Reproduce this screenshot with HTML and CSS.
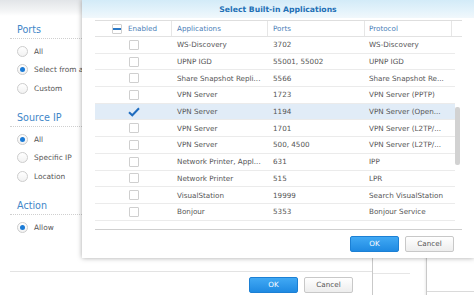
FILE: index.html
```html
<!DOCTYPE html>
<html>
<head>
<meta charset="utf-8">
<link rel="stylesheet" href="styles.css">
</head>
<body>
<div class="desk">
  <div class="far far-a"><div class="far-line"></div></div>
  <div class="far far-b"><div class="far-line"></div></div>

  <section class="win">
    <div class="win-top"></div>
    <div class="form">
      <div class="sec">
        <div class="sec-label">Ports</div>
        <div class="radio"><span class="rb"></span>All</div>
        <div class="radio"><span class="rb on"></span>Select from a list of built-in applications</div>
        <div class="radio"><span class="rb"></span>Custom</div>
      </div>
      <div class="sec">
        <div class="sec-label">Source IP</div>
        <div class="radio"><span class="rb on"></span>All</div>
        <div class="radio"><span class="rb"></span>Specific IP</div>
        <div class="radio"><span class="rb"></span>Location</div>
      </div>
      <div class="sec">
        <div class="sec-label">Action</div>
        <div class="radio"><span class="rb on"></span>Allow</div>
      </div>
    </div>
    <div class="win-foot">
      <button class="btn btn-ok">OK</button>
      <button class="btn btn-cancel">Cancel</button>
    </div>
  </section>

  <section class="dlg">
    <div class="dlg-title">Select Built-in Applications</div>
    <div class="grid">
      <div class="ghead">
        <div class="hc c-en"><span class="cb cb-mixed"><span class="bar"></span></span>Enabled</div>
        <div class="hc c-app">Applications</div>
        <div class="hc c-port">Ports</div>
        <div class="hc c-proto">Protocol</div>
        <div class="hc c-rest"></div>
      </div>
      <div class="gbody">
        <div class="rows">
          <div class="row"><div class="c c-en"><span class="cb"></span></div><div class="c c-app">WS-Discovery</div><div class="c c-port">3702</div><div class="c c-proto">WS-Discovery</div></div>
          <div class="row"><div class="c c-en"><span class="cb"></span></div><div class="c c-app">UPNP IGD</div><div class="c c-port">55001, 55002</div><div class="c c-proto">UPNP IGD</div></div>
          <div class="row"><div class="c c-en"><span class="cb"></span></div><div class="c c-app">Share Snapshot Repli...</div><div class="c c-port">5566</div><div class="c c-proto">Share Snapshot Re...</div></div>
          <div class="row"><div class="c c-en"><span class="cb"></span></div><div class="c c-app">VPN Server</div><div class="c c-port">1723</div><div class="c c-proto">VPN Server (PPTP)</div></div>
          <div class="row sel"><div class="c c-en"><span class="cb cb-on"><svg width="12" height="10" viewBox="0 0 12 10"><path d="M1 5.2 L4.3 8.3 L11 1.3" fill="none" stroke="#1f6cbf" stroke-width="2"/></svg></span></div><div class="c c-app">VPN Server</div><div class="c c-port">1194</div><div class="c c-proto">VPN Server (Open...</div></div>
          <div class="row"><div class="c c-en"><span class="cb"></span></div><div class="c c-app">VPN Server</div><div class="c c-port">1701</div><div class="c c-proto">VPN Server (L2TP/...</div></div>
          <div class="row"><div class="c c-en"><span class="cb"></span></div><div class="c c-app">VPN Server</div><div class="c c-port">500, 4500</div><div class="c c-proto">VPN Server (L2TP/...</div></div>
          <div class="row"><div class="c c-en"><span class="cb"></span></div><div class="c c-app">Network Printer, Appl...</div><div class="c c-port">631</div><div class="c c-proto">IPP</div></div>
          <div class="row"><div class="c c-en"><span class="cb"></span></div><div class="c c-app">Network Printer</div><div class="c c-port">515</div><div class="c c-proto">LPR</div></div>
          <div class="row"><div class="c c-en"><span class="cb"></span></div><div class="c c-app">VisualStation</div><div class="c c-port">19999</div><div class="c c-proto">Search VisualStation</div></div>
          <div class="row"><div class="c c-en"><span class="cb"></span></div><div class="c c-app">Bonjour</div><div class="c c-port">5353</div><div class="c c-proto">Bonjour Service</div></div>
        </div>
        <div class="track"><div class="thumb"></div></div>
      </div>
    </div>
    <div class="dlg-foot">
      <button class="btn btn-ok">OK</button>
      <button class="btn btn-cancel">Cancel</button>
    </div>
  </section>
</div>
</body>
</html>
```

FILE: styles.css
```css
html, body {
  margin: 0;
  padding: 0;
  background: #ffffff;
}
body {
  font-family: "DejaVu Sans", Verdana, sans-serif;
  font-size: 7.2px;
  color: #555555;
}
.desk {
  position: relative;
  width: 474px;
  height: 295px;
  overflow: hidden;
  background: #ffffff;
}

/* windows further back */
.far {
  position: absolute;
  top: 240px;
  height: 60px;
  border-left: 1px solid #c9c9c9;
  box-shadow: -1px 0 2px rgba(0,0,0,0.08);
  background: #ffffff;
}
.far-a { left: 372px; width: 53px; z-index: 1; }
.far-b { left: 426px; width: 48px; z-index: 2; }
.far-line { border-top: 1px solid #e6e6e6; }
.far-a .far-line { margin-top: 33px; width: 37px; }
.far-b .far-line { margin-top: 51px; border-top-color: #dadada; }

/* background window */
.win {
  position: absolute;
  left: 0;
  top: 0;
  width: 372px;
  height: 295px;
  display: flex;
  flex-direction: column;
  background: #ffffff;
  border-right: 1px solid #c9c9c9;
  z-index: 3;
}
.win-top {
  height: 16px;
  background: linear-gradient(#e2e5e8, #f4f5f6 70%, #ffffff);
}
.form {
  padding-top: 8px;
}
.sec + .sec { margin-top: 14.5px; }
.sec-label {
  margin-left: 10px;
  padding-left: 7px;
  padding-bottom: 2px;
  font-size: 9.6px;
  line-height: 12px;
  color: #3f86c8;
  border-bottom: 1px dotted #cfcfcf;
}
.sec-label + .radio { margin-top: 3px; }
.radio {
  height: 18.5px;
  display: flex;
  align-items: center;
  gap: 6px;
  padding-left: 17px;
  white-space: nowrap;
  color: #555555;
  font-size: 7.4px;
}
.rb {
  width: 11px;
  height: 11px;
  box-sizing: border-box;
  border: 1px solid #cdcdcd;
  border-radius: 50%;
  background: linear-gradient(#ffffff, #f2f2f2);
  display: flex;
  align-items: center;
  justify-content: center;
  flex: none;
}
.rb.on::after {
  content: "";
  width: 5px;
  height: 5px;
  border-radius: 50%;
  background: #1b7bd6;
}
.win-foot {
  margin-top: auto;
  margin-left: 10px;
  border-top: 1px solid #e3e3e3;
  height: 24px;
  padding: 5px 19px 0 0;
  box-sizing: border-box;
  display: flex;
  justify-content: flex-end;
  gap: 6px;
}

/* buttons */
.btn {
  width: 49px;
  height: 16px;
  padding: 0;
  border-radius: 2px;
  font-family: "DejaVu Sans", Verdana, sans-serif;
  font-size: 7.2px;
  line-height: 14px;
  box-sizing: border-box;
}
.btn-ok {
  color: #ffffff;
  border: 1px solid #1c80d4;
  background: linear-gradient(#41a9f4, #1f8ae2);
}
.btn-cancel {
  color: #555555;
  border: 1px solid #c8c8c8;
  background: linear-gradient(#ffffff, #ededed);
}

/* dialog */
.dlg {
  position: absolute;
  left: 82px;
  top: 0;
  width: 392px;
  height: 258px;
  background: #ffffff;
  display: flex;
  flex-direction: column;
  box-shadow: 0 0 5px rgba(0,0,0,0.35);
  z-index: 5;
}
.dlg-title {
  height: 18px;
  line-height: 18px;
  padding-top: 1px;
  box-sizing: border-box;
  text-align: center;
  font-weight: bold;
  font-size: 7.7px;
  color: #226fb5;
  background: linear-gradient(#d3ebf8, #e4f3fb 60%, #f1f8fc);
}
.grid {
  margin: 2px 12px 0 13px;
  border-top: 1px solid #dedede;
  border-bottom: 1px solid #cfcfcf;
}
.ghead {
  display: flex;
  height: 16px;
  box-sizing: border-box;
  border-bottom: 1px solid #e2e2e2;
}
.hc {
  display: flex;
  align-items: center;
  box-sizing: border-box;
  border-right: 1px solid #e6e6e6;
  color: #4a80b8;
  white-space: nowrap;
}
.hc.c-rest { border-right: none; flex: 1; }
.c-en { width: 77px; }
.c-app { width: 96px; padding-left: 5px; }
.c-port { width: 97px; padding-left: 5px; }
.c-proto { width: 87px; padding-left: 4px; }
.hc.c-en { padding-left: 17px; gap: 6px; }
.gbody {
  display: flex;
  height: 192px;
}
.rows { width: 360px; }
.row {
  display: flex;
  height: 16.7px;
  box-sizing: border-box;
  border-bottom: 1px solid #ebebeb;
}
.row.sel { background: #e1ecf7; }
.c {
  display: flex;
  align-items: center;
  box-sizing: border-box;
  white-space: nowrap;
  overflow: hidden;
  color: #555555;
}
.c.c-en { justify-content: center; }
.c.c-proto { width: 90px; }
.cb {
  width: 10px;
  height: 10px;
  box-sizing: border-box;
  border: 1px solid #cfcfcf;
  border-radius: 1px;
  background: #ffffff;
  display: flex;
  align-items: center;
  justify-content: center;
  flex: none;
}
.cb-mixed .bar {
  width: 8px;
  height: 2px;
  background: #2a78c6;
}
.cb-on {
  border: none;
  background: transparent;
  width: 12px;
}
.track {
  position: relative;
  width: 7px;
}
.thumb {
  position: absolute;
  left: 0;
  top: 70px;
  width: 5px;
  height: 58px;
  border-radius: 2px;
  background: #d2d2d2;
}
.dlg-foot {
  margin-top: 6px;
  padding-right: 20px;
  display: flex;
  justify-content: flex-end;
  gap: 6px;
}
```
